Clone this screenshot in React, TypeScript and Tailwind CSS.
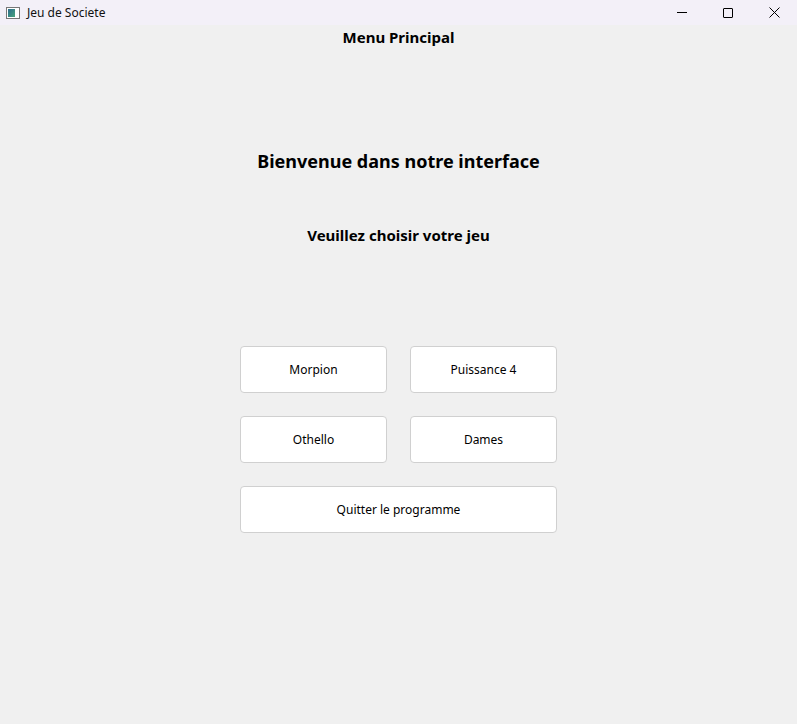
import React from "react";

const font = { fontFamily: '"Noto Sans", "Liberation Sans", sans-serif' };

function GameButton({ label, wide }: { label: string; wide?: boolean }) {
  return (
    <button
      className={`${wide ? "col-span-2" : ""} h-[47px] rounded-[4px] border border-[#d0d0d0] bg-white text-[12px] text-black`}
    >
      {label}
    </button>
  );
}

export default function App() {
  return (
    <div className="flex h-[724px] w-[797px] flex-col bg-[#f0f0f0] text-black" style={font}>
      <div className="flex h-[25px] items-center bg-[#f3f0f8]">
        <div className="ml-[6px] flex h-[12px] w-[14px] items-center gap-[1px] border border-[#777] bg-white p-[1px]">
          <div className="h-full w-[7px] bg-gradient-to-br from-[#2d6b8c] to-[#4aa57a]" />
        </div>
        <span className="ml-[7px] text-[12px] text-[#111]">Jeu de Societe</span>
        <div className="ml-auto flex h-full items-center">
          <div className="flex w-[46px] justify-center">
            <div className="h-px w-[10px] bg-black" />
          </div>
          <div className="flex w-[46px] justify-center">
            <div className="h-[10px] w-[10px] rounded-[1px] border border-black" />
          </div>
          <div className="flex w-[46px] justify-center">
            <svg width="11" height="11" viewBox="0 0 11 11" stroke="black" strokeWidth="1">
              <path d="M0.5 0.5 L10.5 10.5 M10.5 0.5 L0.5 10.5" />
            </svg>
          </div>
        </div>
      </div>

      <div className="flex flex-col items-center">
        <h1 className="mt-[2px] h-[20px] text-[15px] font-bold leading-[20px]">Menu Principal</h1>
        <h2 className="mt-[102px] h-[24px] text-[18px] font-bold leading-[24px]">
          Bienvenue dans notre interface
        </h2>
        <h3 className="mt-[52px] h-[20px] text-[15px] font-bold leading-[20px]">
          Veuillez choisir votre jeu
        </h3>
        <div className="mt-[101px] grid grid-cols-[147px_147px] gap-[23px]">
          <GameButton label="Morpion" />
          <GameButton label="Puissance 4" />
          <GameButton label="Othello" />
          <GameButton label="Dames" />
          <GameButton label="Quitter le programme" wide />
        </div>
      </div>
    </div>
  );
}
